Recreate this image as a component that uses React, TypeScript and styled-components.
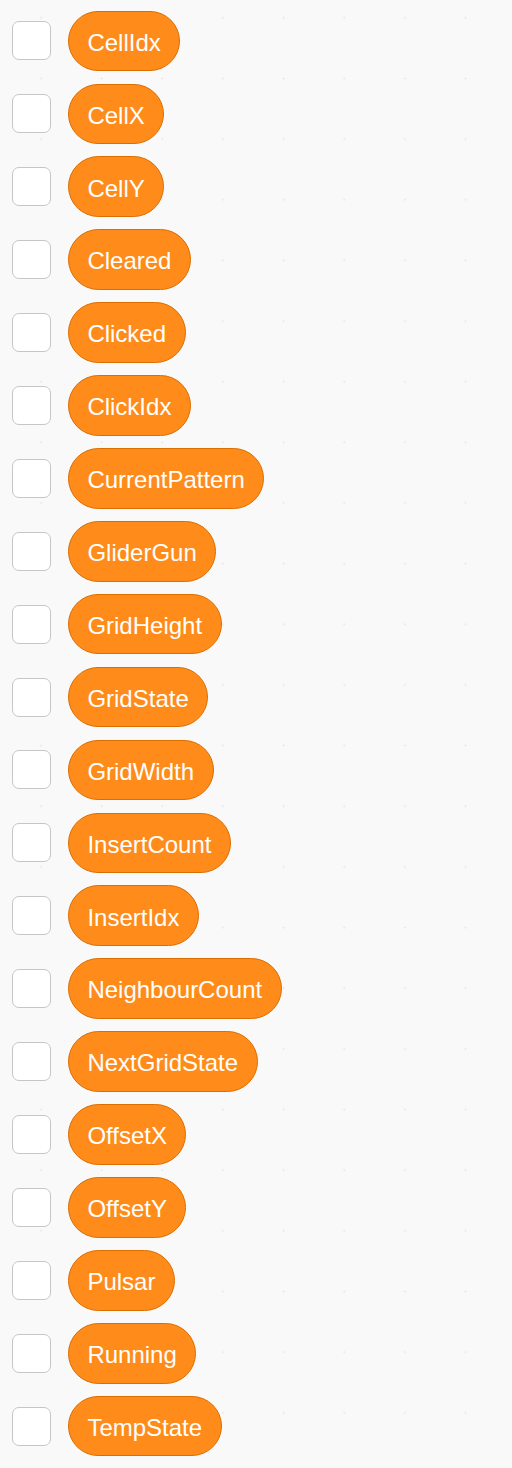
import React from "react";
import styled, { createGlobalStyle } from "styled-components";

const Global = createGlobalStyle`
  html, body {
    margin: 0;
    padding: 0;
    background-color: #f9f9f9;
  }
  body {
    font-family: "Liberation Sans", Arial, Helvetica, sans-serif;
  }
`;

const Canvas = styled.div`
  width: 512px;
  min-height: 1468px;
  box-sizing: border-box;
  background-color: #f9f9f9;
  background-image: radial-gradient(circle, #e9e9e9 0, #e9e9e9 0.8px, rgba(233, 233, 233, 0) 1.4px);
  background-size: 60.67px 60.67px;
  background-position: 10.67px -12.6px;
  padding: 10.6px 0 0 11.7px;
  display: flex;
  flex-direction: column;
  gap: 12.32px;
`;

const Row = styled.div`
  display: flex;
  align-items: center;
  gap: 17.2px;
  height: 60.6px;
`;

const Checkbox = styled.div`
  width: 39px;
  height: 39px;
  box-sizing: border-box;
  background: #ffffff;
  border: 1.5px solid #c6c6c6;
  border-radius: 7px;
  flex: none;
`;

const Pill = styled.div`
  height: 60.6px;
  box-sizing: border-box;
  padding: 3.6px 18.5px 0;
  display: flex;
  align-items: center;
  background: #ff8c1a;
  border: 1px solid #db6e00;
  border-radius: 31px;
  color: #ffffff;
  font-family: "Liberation Sans", Arial, Helvetica, sans-serif;
  font-size: 24px;
  line-height: 1;
  white-space: nowrap;
`;

const names = [
  "CellIdx",
  "CellX",
  "CellY",
  "Cleared",
  "Clicked",
  "ClickIdx",
  "CurrentPattern",
  "GliderGun",
  "GridHeight",
  "GridState",
  "GridWidth",
  "InsertCount",
  "InsertIdx",
  "NeighbourCount",
  "NextGridState",
  "OffsetX",
  "OffsetY",
  "Pulsar",
  "Running",
  "TempState",
];

export default function App() {
  return (
    <>
      <Global />
      <Canvas>
        {names.map((n) => (
          <Row key={n}>
            <Checkbox />
            <Pill>{n}</Pill>
          </Row>
        ))}
      </Canvas>
    </>
  );
}
